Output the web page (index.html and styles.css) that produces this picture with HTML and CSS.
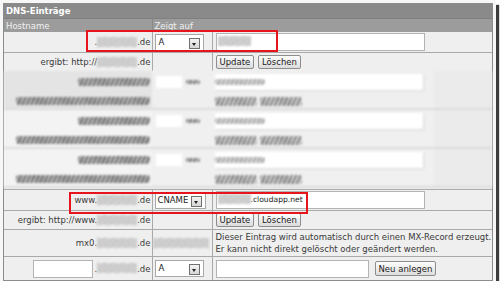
FILE: index.html
```html
<!DOCTYPE html>
<html lang="de">
<head>
    <meta charset="UTF-8">
    <title>DNS-Einträge</title>
    <link rel="stylesheet" href="styles.css">
</head>
<body>
    <div class="frame">
        <div class="title">DNS-Einträge</div>

        <table class="dns">
            <colgroup>
                <col class="c-host">
                <col class="c-type">
                <col>
            </colgroup>
            <tr class="head">
                <th>Hostname</th>
                <th colspan="2">Zeigt auf</th>
            </tr>
            <tr class="main">
                <td class="host">.<span class="smudge"></span>.de</td>
                <td><div class="select">A<span class="arrow"></span></div></td>
                <td><div class="input"><span class="smudge long"></span></div></td>
            </tr>
            <tr class="sub">
                <td class="host">ergibt: http://<span class="smudge"></span>.de</td>
                <td></td>
                <td><button>Update</button> <button>Löschen</button></td>
            </tr>
        </table>

        <!-- ausgeblendeter Bereich -->
        <div class="torn">
            <div class="tgroup first">
                <span class="hatch t-host"></span>
                <span class="t-sel"><i></i><span class="hatch"></span></span>
                <span class="t-input"><span class="hatch"></span></span>
                <span class="hatch t-url"></span>
                <span class="t-btns"><span class="hatch"></span><span class="hatch"></span></span>
            </div>
            <div class="tgroup">
                <span class="hatch t-host"></span>
                <span class="t-sel"><i></i><span class="hatch"></span></span>
                <span class="t-input"><span class="hatch"></span></span>
                <span class="hatch t-url"></span>
                <span class="t-btns"><span class="hatch"></span><span class="hatch"></span></span>
            </div>
            <div class="tgroup">
                <span class="hatch t-host"></span>
                <span class="t-sel"><i></i><span class="hatch"></span></span>
                <span class="t-input"><span class="hatch"></span></span>
                <span class="hatch t-url"></span>
                <span class="t-btns"><span class="hatch"></span><span class="hatch"></span></span>
            </div>
        </div>

        <table class="dns lower">
            <colgroup>
                <col class="c-host">
                <col class="c-type">
                <col>
            </colgroup>
            <tr class="main">
                <td class="host">www.<span class="smudge"></span>.de</td>
                <td><div class="select wide">CNAME<span class="arrow"></span></div></td>
                <td><div class="input"><span class="smudge"></span>.cloudapp.net</div></td>
            </tr>
            <tr class="sub">
                <td class="host">ergibt: http://www.<span class="smudge"></span>.de</td>
                <td></td>
                <td><button>Update</button> <button>Löschen</button></td>
            </tr>
            <tr class="mx">
                <td class="host">mx0.<span class="smudge"></span>.de</td>
                <td><span class="smudge type"></span></td>
                <td class="note">Dieser Eintrag wird automatisch durch einen MX-Record erzeugt.<br>Er kann nicht direkt gelöscht oder geändert werden.</td>
            </tr>
            <tr class="new">
                <td class="host"><div class="input small"></div>.<span class="smudge"></span>.de</td>
                <td><div class="select">A<span class="arrow"></span></div></td>
                <td><div class="input medium"></div><button class="add">Neu anlegen</button></td>
            </tr>
        </table>

        <div class="mark mark-a"></div>
        <div class="mark mark-b"></div>
    </div>
</body>
</html>
```

FILE: styles.css
```css
body {
    margin: 0;
    background-color: #fff;
    font-family: "DejaVu Sans", Verdana, sans-serif;
    font-size: 8.5px;
    color: #3a3a3a;
}

.frame {
    position: relative;
    width: 488px;
    margin: 3px 0 0 3px;
    border: 1px solid #8c8c8c;
    background-color: #efefef;
    box-shadow: 0 0 0 3px #f7f7f7, 4px 4px 1px 2px #3c3c3c;
}

.title {
    height: 14px;
    line-height: 14px;
    padding-left: 2px;
    background-color: #8a8a8a;
    color: #fff;
    font-weight: bold;
}

.dns {
    width: 100%;
    border-collapse: collapse;
    table-layout: fixed;
}

.c-host {
    width: 148px;
}

.c-type {
    width: 60px;
}

.dns th {
    height: 13px;
    padding: 0 2px;
    background-color: #9c9c9c;
    color: #f0f0f0;
    font-weight: normal;
    text-align: left;
    border-top: 1px solid #7f7f7f;
}

.dns th + th {
    border-left: 1px solid #8a8a8a;
}

.dns td {
    padding: 0 0 0 2px;
    border-right: 1px solid #a9a9a9;
    border-bottom: 1px solid #a9a9a9;
    vertical-align: middle;
    white-space: nowrap;
}

.dns td:last-child {
    border-right: none;
    padding-left: 3px;
}

.dns.lower {
    border-top: 1px solid #a9a9a9;
}

.main td {
    height: 20px;
}

.sub td {
    height: 18px;
}

.mx td {
    height: 26px;
}

.new td {
    height: 23px;
}

.dns tr:last-child td {
    border-bottom: none;
}

.host {
    text-align: right;
    padding-right: 1px !important;
}

.smudge {
    display: inline-block;
    width: 40px;
    height: 10px;
    vertical-align: -2px;
    background: repeating-linear-gradient(160deg, #b8b8b8 0 1px, #d8d8d8 1px 3px);
    filter: blur(1px);
}

.smudge.long {
    width: 48px;
    margin-left: 4px;
}

.smudge.type {
    width: 56px;
    margin-left: -2px;
}

.select {
    position: relative;
    width: 44px;
    height: 15px;
    line-height: 15px;
    padding-left: 3px;
    box-sizing: content-box;
    background-color: #fff;
    border: 1px solid #a8a8a8;
    color: #222;
}

.select.wide {
    width: 47px;
    padding-left: 2px;
}

.arrow {
    position: absolute;
    right: 3px;
    top: 3px;
    width: 9px;
    height: 9px;
    border: 1px solid #707070;
    background: linear-gradient(#f4f4f4, #d6d6d6);
}

.arrow::after {
    content: "";
    position: absolute;
    left: 2px;
    top: 4px;
    border-left: 2.5px solid transparent;
    border-right: 2.5px solid transparent;
    border-top: 3px solid #222;
}

.input {
    display: inline-block;
    width: 207px;
    height: 16px;
    line-height: 16px;
    vertical-align: middle;
    background-color: #fff;
    border: 1px solid #b3b3b3;
    color: #222;
    font-size: 7.6px;
}

.input .smudge {
    width: 33px;
    margin-left: 1px;
}

.input.small {
    width: 58px;
    margin-right: 1px;
}

.input.medium {
    width: 151px;
    margin-right: 6px;
}

button {
    height: 14px;
    padding: 0 3px;
    margin-right: 1px;
    font-family: "DejaVu Sans", Verdana, sans-serif;
    font-size: 8.5px;
    color: #222;
    background: linear-gradient(#fdfdfd, #dcdcdc);
    border: 1px solid #8d8d8d;
    border-radius: 2px;
    vertical-align: middle;
}

button.add {
    height: 15px;
}

.note {
    line-height: 12px;
    white-space: nowrap;
}

/* verwischter Ausschnitt */
.torn {
    height: 118px;
    filter: blur(1.2px);
}

.tgroup {
    display: grid;
    grid-template-columns: 148px 60px 1fr;
    grid-template-rows: 21px 18px;
    height: 39px;
    border-bottom: 2px solid #dcdcdc;
    box-sizing: border-box;
    background: linear-gradient(90deg, #f3f3f3 0 148px, #f0f0f0 148px 430px, #ebebeb 430px);
}

.tgroup.first {
    background: linear-gradient(90deg, #e4e4e4 0 148px, #efefef 148px 430px, #ebebeb 430px);
}

.hatch {
    display: block;
    height: 8px;
    background: repeating-linear-gradient(115deg, #6f6f6f 0 2px, #bdbdbd 2px 4px);
    border-radius: 3px;
}

.t-host {
    width: 72px;
    justify-self: end;
    align-self: center;
    margin-right: 2px;
}

.t-sel {
    display: flex;
    align-items: center;
    gap: 4px;
    padding-left: 4px;
}

.t-sel i {
    width: 26px;
    height: 12px;
    background-color: #fff;
}

.t-sel .hatch {
    width: 14px;
    height: 4px;
}

.t-input {
    display: flex;
    align-items: center;
    width: 208px;
    height: 16px;
    margin: 3px 0 0 3px;
    background-color: #fff;
    box-shadow: 1px 1px 2px #d8d8d8;
}

.t-input .hatch {
    width: 50px;
    height: 6px;
    opacity: 0.6;
}

.t-url {
    grid-column: 1;
    width: 134px;
    justify-self: end;
    align-self: center;
    margin-right: 2px;
}

.t-btns {
    grid-column: 3;
    display: flex;
    align-items: center;
    gap: 3px;
    padding-left: 3px;
}

.t-btns .hatch {
    width: 42px;
    height: 9px;
    background: repeating-linear-gradient(115deg, #7d7d7d 0 2px, #d4d4d4 2px 4px);
}

/* rote Markierungen */
.mark {
    position: absolute;
    border: 2px solid #e8141c;
}

.mark-a {
    left: 82px;
    top: 26px;
    width: 188px;
    height: 18px;
}

.mark-b {
    left: 65px;
    top: 188px;
    width: 235px;
    height: 18px;
}
```
